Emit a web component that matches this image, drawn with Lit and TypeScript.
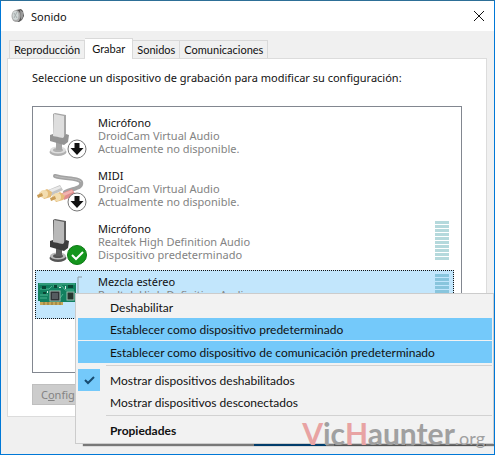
import { LitElement, html, css, svg, nothing } from "lit";
import { customElement } from "lit/decorators.js";
import { classMap } from "lit/directives/class-map.js";

type Art = "mic-off" | "cable" | "mic" | "card";
interface Device { name: string; driver: string; status: string; art: Art; badge?: "down" | "ok"; meter?: boolean; selected?: boolean; }

const devices: Device[] = [
  { name: "Micrófono", driver: "DroidCam Virtual Audio", status: "Actualmente no disponible.", art: "mic-off", badge: "down" },
  { name: "MIDI", driver: "DroidCam Virtual Audio", status: "Actualmente no disponible.", art: "cable", badge: "down" },
  { name: "Micrófono", driver: "Realtek High Definition Audio", status: "Dispositivo predeterminado", art: "mic", badge: "ok", meter: true },
  { name: "Mezcla estéreo", driver: "Realtek High Definition Audio", status: "", art: "card", meter: true, selected: true },
];

const micShape = (post: string, face: string, collar: string, base: string) => svg`
  <ellipse cx="23" cy="41" rx="8.500" ry="4" fill=${base}/>
  <ellipse cx="23" cy="39" rx="8" ry="3.500" fill=${face}/>
  <ellipse cx="23" cy="39" rx="5" ry="2" fill=${base}/>
  <rect x="21" y="29" width="6" height="10" fill=${post}/>
  <path d="M18 3 L20 2 L31 4 L31 27 L18 25 Z" fill=${post}/>
  <path d="M19 3 L29 5 L29 27 L18 25 Z" fill=${face}/>
  <path d="M15 24 L18 23 L18 25 L28 27 L31 23 L34 24 L33 31 L29 34 L15 30 Z" fill=${collar}/>`;

const art = (kind: Art) => {
  if (kind === "mic-off") return micShape("#a6a6a6", "#dedede", "#949494", "#b0b0b0");
  if (kind === "mic") return micShape("#5e5e5e", "#b9b9b9", "#3c3c3c", "#555");
  if (kind === "cable") return svg`
    <path d="M20 12 C30 15 44 14 46 18 C48 24 39 24 30 28" fill="none" stroke="#a3a3a3" stroke-width="4" stroke-linecap="round"/>
    <path d="M20 12 C30 15 44 14 46 18" fill="none" stroke="#bcbcbc" stroke-width="1"/>
    <path d="M13 26 L25 21 L28 26 L16 32Z" fill="#c4c4c4"/><path d="M14 26 L25 22 L26 24 L15 29Z" fill="#e9e9e9"/>
    <path d="M4 29 L12 25 L17 28 L16 33 L9 35Z" fill="#e5bd7a"/><circle cx="9" cy="30" r="4" fill="#f3ddb0"/><path d="M2 31 l5-2 1 3-5 2z" fill="#c99b55"/>
    <path d="M25 30 L37 25 L41 31 L29 36Z" fill="#e08d8d"/><path d="M26 30 L37 26 L38 28 L27 33Z" fill="#f2b4b0"/>
    <path d="M17 32 L25 28 L30 32 L28 36 L21 38Z" fill="#e5bd7a"/><circle cx="22" cy="33" r="4" fill="#f3ddb0"/><path d="M15 34 l5-2 1 3-5 2z" fill="#c99b55"/>`;
  return svg`
    <path d="M43 25 V7 H47" stroke="#8f9ba3" fill="none"/>
    <g transform="translate(0 6)">
    <path d="M3 7 L41 7 V26 H27 V29 H5 V25 H3Z" fill="#12805f"/>
    <path d="M4 8H40M5 13h9l3-3M5 19h8M18 10h9l3 4h9M28 18l-3 4M5 22h7" stroke="#4fb592" stroke-width="1" fill="none"/>
    <rect x="5" y="26" width="23" height="3" fill="#c4a658"/><path d="M9 26v3M13 26v3M17 26v3M21 26v3M25 26v3" stroke="#8a7338"/>
    <rect x="15" y="15" width="10" height="10" fill="#2f3337" stroke="#9cb8ae"/><rect x="17" y="17" width="6" height="6" fill="#555b60"/>
    <rect x="32" y="16" width="7" height="8" fill="#26372f" stroke="#9cc4b4"/><path d="M7 10h4v3H7zM19 9h3v3h-3zM33 9h5v3h-5zM8 16h3v2H8z" fill="#0a4534"/>
    <path d="M30 10h1v3h-1zM24 11h2v1h-2zM12 15h1v2h-1z" fill="#d7ede5"/></g>`;
};

const badge = (kind: "down" | "ok") => kind === "down"
  ? svg`<circle cx="42" cy="38" r="9" fill="#fff" stroke="#777"/><path d="M39.500 32h5v5h4L42 44l-6.500-7h4z" fill="#111"/>`
  : svg`<circle cx="42" cy="38" r="9.500" fill="#14951d" stroke="#0c7a14"/><path d="M37 38l4 4 7-7" fill="none" stroke="#fff" stroke-width="2"/>`;

@customElement("level-meter")
export class LevelMeter extends LitElement {
  static styles = css`
    :host { display: flex; flex-direction: column; gap: 1px; width: 14px; }
    .bar { height: 3px; background: var(--meter, #b5d9dc); }
  `;
  render() { return Array.from({ length: 10 }, () => html`<div class="bar"></div>`); }
}

@customElement("app-root")
export class AppRoot extends LitElement {
  static styles = css`
    :host { display: block; font: 11px/13px "Noto Sans", "Open Sans", sans-serif; color: #111; }
    * { box-sizing: border-box; }
    button { font: inherit; color: inherit; margin: 0; border: 0; padding: 0; background: none; }
    .window { position: relative; overflow: hidden; border: 1px solid #0078d7; border-top-color: #2d6f97; background: #f0f0f0; }
    .title { display: flex; align-items: center; height: 30px; padding: 0 9px 0 10px; gap: 6px; background: #fff; }
    h1 { flex: 1; margin: 0; font: inherit; }
    .title svg, .close svg { display: block; }
    .tabs { display: flex; align-items: flex-end; height: 27px; padding-left: 8px; }
    .tab { height: 18px; padding: 0 4px; border: 1px solid #d9d9d9; border-left-width: 0; border-bottom: 0; white-space: nowrap; font-family: Lato, "Noto Sans", sans-serif; }
    .tab:first-child { border-left-width: 1px; }
    .tab.active { height: 21px; padding: 0 7px 2px; background: #fff; margin-bottom: -1px; z-index: 1; }
    .panel { margin: 0 7px 0 6px; padding: 12px 24px 11px; background: #fff; border: 1px solid #dcdcdc; }
    .hint { margin: 0; line-height: 13px; }
    .list { list-style: none; margin: 22px 0 11px; border: 1px solid #828790; padding: 4px 7px 53px 2px; display: flex; flex-direction: column; gap: 4px; }
    .device { display: flex; height: 49px; padding-right: 5px; }
    .device.selected { background: #c2e6fc; outline: 1px dotted #111; outline-offset: -1px; --meter: #88c5dd; }
    .art { width: 52px; height: 49px; margin-right: 11px; flex: none; }
    .text { flex: 1; padding-top: 5px; color: #838383; }
    .name { color: #111; }
    level-meter { margin-top: 4px; }
    .config { height: 21px; width: 90px; padding-left: 8px; text-align: left; background: #ccc; border: 1px solid #bfbfbf; color: #838383; display: block; }
    .actions { display: flex; justify-content: flex-end; gap: 8px; padding: 7px 8px 8px; }
    .action { width: 72px; height: 22px; background: #e1e1e1; border: 1px solid #adadad; }
    .action.primary { border: 2px solid #0078d7; }
    .menu { position: absolute; left: 74px; right: 0; top: 292px; border: 1px solid #ccc; background: #f2f2f2; padding: 2px 1px 2px 2px; box-shadow: 8px 2px 1px 0 rgba(0, 0, 0, 0.5); font-family: Lato, "Noto Sans", sans-serif; font-size: 12px; }
    .item { display: flex; align-items: center; width: 100%; height: 22px; text-align: left; }
    .mark { width: 22px; height: 22px; margin-right: 10px; flex: none; }
    .hot { background: #74c9fa; }
    .hot + .hot { margin-top: 1px; }
    .strong { font-weight: 700; }
    hr { border: 0; height: 1px; margin: 2px 0 3px 28px; background: #d2d2d2; }
    .brand { position: absolute; right: 9px; bottom: 1px; font: 700 30px/30px Lato, "Open Sans", sans-serif; color: #a0a0a0; }
    .brand em { font-style: normal; color: #e8a3a3; }
    .brand small { font-size: 18px; font-weight: 400; }
  `;

  private tab(label: string, active = false) {
    return html`<button role="tab" aria-selected=${active} class=${classMap({ tab: true, active })}>${label}</button>`;
  }
  private item(label: string, cls = "", checked = false) {
    return html`<button class="item ${cls}" role=${checked ? "menuitemcheckbox" : "menuitem"}>
      <span class=${classMap({ mark: true, hot: checked })}>${checked ? html`<svg width="22" height="22"><path d="M7 11l3 3 6-6" fill="none" stroke="#174b70" stroke-width="2"/></svg>` : nothing}</span>${label}</button>`;
  }

  render() {
    return html`<main class="window">
      <header class="title">
        <svg width="14" height="16" viewBox="0 0 14 16"><path d="M5 2l5-1 2 2 1 5-2 4-3 2-4-1z" fill="#555"/><path d="M9 2l3 2v5l-2 3z" fill="#999"/><ellipse cx="5" cy="8" rx="4.500" ry="6" fill="#aaa"/><ellipse cx="4.500" cy="7.500" rx="3" ry="4.500" fill="#cfd6d6"/><path d="M3 5l3 5M6 4L3 10" stroke="#a6adad"/></svg>
        <h1>Sonido</h1>
        <button class="close" aria-label="Cerrar"><svg width="12" height="12"><path d="M1 1l10 10M11 1L1 11" stroke="#111"/></svg></button>
      </header>
      <nav class="tabs" role="tablist">${this.tab("Reproducción")}${this.tab("Grabar", true)}${this.tab("Sonidos")}${this.tab("Comunicaciones")}</nav>
      <section class="panel">
        <p class="hint">Seleccione un dispositivo de grabación para modificar su configuración:</p>
        <ul class="list">${devices.map((d) => html`<li class=${classMap({ device: true, selected: !!d.selected })}>
          <svg class="art" viewBox="0 0 52 49">${art(d.art)}${d.badge ? badge(d.badge) : nothing}</svg>
          <div class="text"><div class="name">${d.name}</div><div>${d.driver}</div><div>${d.status}</div></div>
          ${d.meter ? html`<level-meter></level-meter>` : nothing}</li>`)}</ul>
        <button class="config" disabled>C<u>o</u>nfigurar</button>
      </section>
      <footer class="actions">
        <button class="action primary" aria-label="Aceptar"></button>
        <button class="action" aria-label="Cancelar"></button>
        <button class="action" aria-label="Aplicar"></button>
      </footer>
      <div class="menu" role="menu">
        ${this.item("Deshabilitar")}
        ${this.item("Establecer como dispositivo predeterminado", "hot")}
        ${this.item("Establecer como dispositivo de comunicación predeterminado", "hot")}
        <hr>
        ${this.item("Mostrar dispositivos deshabilitados", "", true)}
        ${this.item("Mostrar dispositivos desconectados")}
        <hr>
        ${this.item("Propiedades", "strong")}
      </div>
      <div class="brand"><em>V</em>ic<em>H</em>aunter<small>.org</small></div>
    </main>`;
  }
}
